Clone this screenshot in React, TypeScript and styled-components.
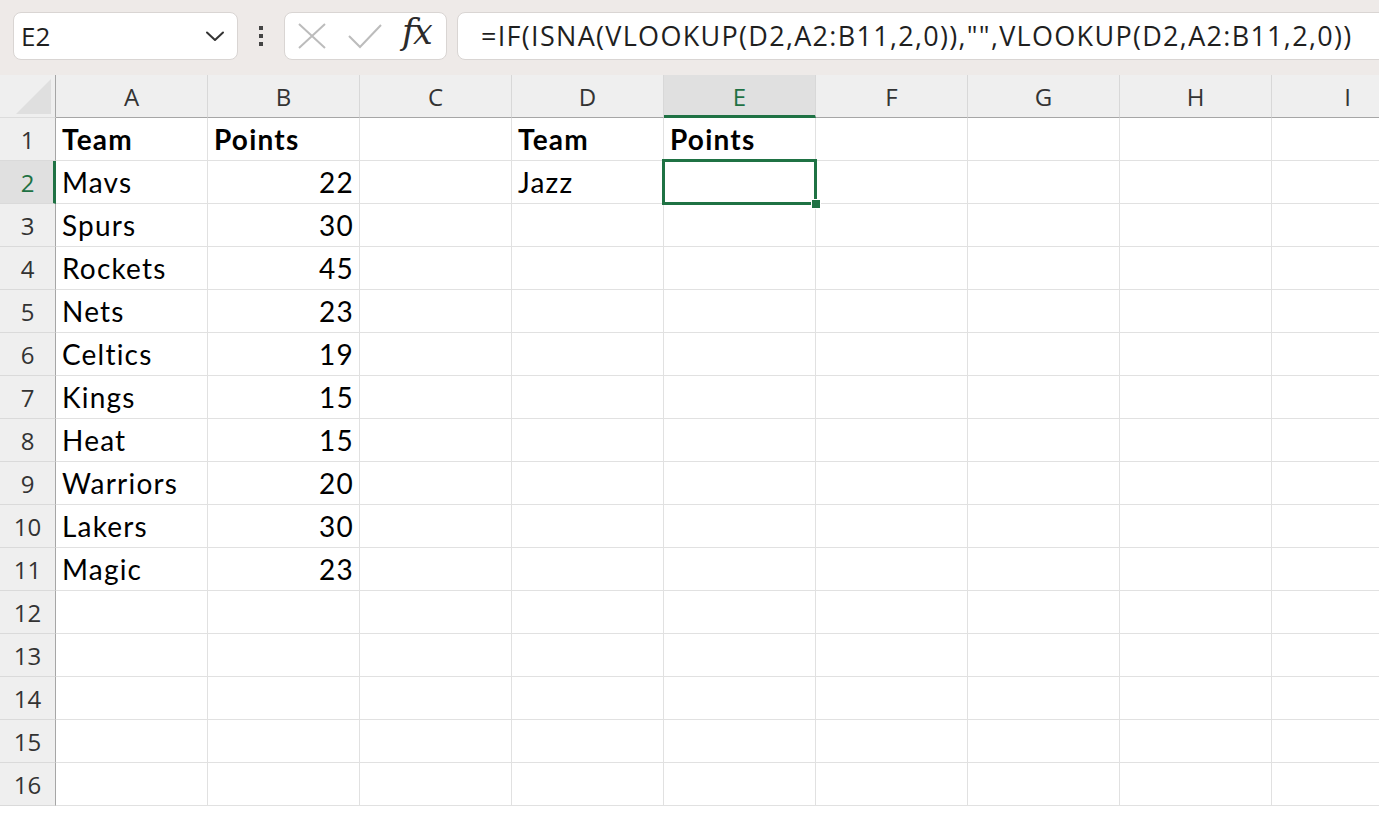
import styled, { createGlobalStyle } from "styled-components";

const COLS = ["A", "B", "C", "D", "E", "F", "G", "H", "I"];
const ROW_COUNT = 16;
const green = "#1f7244";

type CellValue = { text: string; bold?: boolean; num?: boolean };

const data: Record<string, CellValue> = {
  A1: { text: "Team", bold: true },
  B1: { text: "Points", bold: true },
  D1: { text: "Team", bold: true },
  E1: { text: "Points", bold: true },
  D2: { text: "Jazz" },
};

const teams: [string, number][] = [
  ["Mavs", 22],
  ["Spurs", 30],
  ["Rockets", 45],
  ["Nets", 23],
  ["Celtics", 19],
  ["Kings", 15],
  ["Heat", 15],
  ["Warriors", 20],
  ["Lakers", 30],
  ["Magic", 23],
];
teams.forEach(([name, pts], i) => {
  data[`A${i + 2}`] = { text: name };
  data[`B${i + 2}`] = { text: String(pts), num: true };
});

const GlobalStyle = createGlobalStyle`
  html, body {
    margin: 0;
    padding: 0;
    background: #ffffff;
    overflow: hidden;
  }
  * {
    box-sizing: border-box;
  }
`;

const Page = styled.div`
  width: 1379px;
  height: 814px;
  overflow: hidden;
  background: #ffffff;
  font-family: "Open Sans", "Noto Sans", sans-serif;
`;

const Toolbar = styled.div`
  height: 75px;
  background: #eeeae8;
  display: flex;
  align-items: center;
  padding: 0 0 4px 13px;
`;

const Box = styled.div`
  height: 48px;
  background: #ffffff;
  border: 1px solid #d9d5d3;
  border-radius: 8px;
  display: flex;
  align-items: center;
`;

const NameBox = styled(Box)`
  width: 225px;
  padding: 0 10px 0 7px;
  justify-content: space-between;
  font-size: 26px;
  color: #1f1f1f;
`;

const Dots = styled.div`
  width: 46px;
  display: flex;
  flex-direction: column;
  align-items: center;
  gap: 4px;

  span {
    width: 4px;
    height: 4px;
    background: #444;
  }
`;

const FxBox = styled(Box)`
  width: 163px;
  padding: 0 0 0 13px;
  gap: 22px;
`;

const FxLabel = styled.span`
  font-family: "DejaVu Serif", "Liberation Serif", serif;
  font-style: italic;
  font-weight: 400;
  font-size: 35px;
  color: #2b2b2b;
  letter-spacing: -2px;
  margin: -7px 0 0 -2px;
`;

const FormulaBox = styled(Box)`
  flex: 1;
  margin-left: 10px;
  margin-right: -20px;
  padding-left: 23px;
  font-size: 27px;
  letter-spacing: 1.3px;
  color: #1f1f1f;
  white-space: nowrap;
`;

const Sheet = styled.div`
  display: grid;
  grid-template-columns: 56px repeat(${COLS.length}, 152px);
  grid-auto-rows: 43px;
`;

const Corner = styled.div`
  position: relative;
  background: #efefef;
  border-bottom: 1px solid #dcdcdc;
  border-right: 1px solid #a6a6a6;

  &::after {
    content: "";
    position: absolute;
    right: 4px;
    bottom: 3px;
    width: 0;
    height: 0;
    border-left: 35px solid transparent;
    border-bottom: 35px solid #dfdfdf;
  }
`;

const ColHeader = styled.div<{ $active?: boolean }>`
  background: ${(p) => (p.$active ? "#e0e0e0" : "#efefef")};
  border-right: 1px solid #d8d8d8;
  border-bottom: ${(p) => (p.$active ? `3px solid ${green}` : "1px solid #a6a6a6")};
  display: flex;
  align-items: center;
  justify-content: center;
  padding-top: ${(p) => (p.$active ? "2px" : "0")};
  font-size: 24px;
  color: ${(p) => (p.$active ? green : "#333333")};
`;

const RowHeader = styled.div<{ $active?: boolean }>`
  background: ${(p) => (p.$active ? "#e0e0e0" : "#efefef")};
  border-bottom: 1px solid #dadada;
  border-right: ${(p) => (p.$active ? `3px solid ${green}` : "1px solid #a6a6a6")};
  padding-left: ${(p) => (p.$active ? "2px" : "0")};
  display: flex;
  align-items: center;
  justify-content: center;
  font-size: 24px;
  color: ${(p) => (p.$active ? green : "#333333")};
`;

const Cell = styled.div<{ $bold?: boolean; $num?: boolean; $selected?: boolean }>`
  position: relative;
  border-right: 1px solid #e1e1e1;
  border-bottom: 1px solid #e1e1e1;
  display: flex;
  align-items: flex-end;
  justify-content: ${(p) => (p.$num ? "flex-end" : "flex-start")};
  padding: 0 5px 4px 6px;
  font-family: "Lato", "Carlito", sans-serif;
  font-size: 28px;
  letter-spacing: 1.2px;
  font-weight: ${(p) => (p.$bold ? 700 : 400)};
  color: #000000;
  white-space: nowrap;

  ${(p) =>
    p.$selected &&
    `
    &::before {
      content: "";
      position: absolute;
      left: -2px;
      top: -2px;
      right: -2px;
      bottom: -2px;
      border: 3px solid ${green};
      z-index: 2;
    }
    &::after {
      content: "";
      position: absolute;
      right: -6px;
      bottom: -6px;
      width: 8px;
      height: 8px;
      background: ${green};
      border: 1px solid #ffffff;
      z-index: 3;
    }
  `}
`;

const Chevron = () => (
  <svg width="24" height="24" viewBox="0 0 24 24" fill="none">
    <path d="M4 8.5 L12 16 L20 8.5" stroke="#333" strokeWidth="2" strokeLinecap="round" strokeLinejoin="round" />
  </svg>
);

const CrossIcon = () => (
  <svg width="28" height="26" viewBox="0 0 28 26" fill="none">
    <path d="M1 1 L27 25 M27 1 L1 25" stroke="#bcbcbc" strokeWidth="2" />
  </svg>
);

const CheckIcon = () => (
  <svg width="34" height="26" viewBox="0 0 34 26" fill="none">
    <path d="M1 13 L12 24 L33 2" stroke="#bcbcbc" strokeWidth="2" />
  </svg>
);

export default function App() {
  return (
    <Page>
      <GlobalStyle />
      <Toolbar>
        <NameBox>
          <span>E2</span>
          <Chevron />
        </NameBox>
        <Dots>
          <span />
          <span />
          <span />
        </Dots>
        <FxBox>
          <CrossIcon />
          <CheckIcon />
          <FxLabel>fx</FxLabel>
        </FxBox>
        <FormulaBox>=IF(ISNA(VLOOKUP(D2,A2:B11,2,0)),"",VLOOKUP(D2,A2:B11,2,0))</FormulaBox>
      </Toolbar>
      <Sheet>
        <Corner />
        {COLS.map((c) => (
          <ColHeader key={c} $active={c === "E"}>
            {c}
          </ColHeader>
        ))}
        {Array.from({ length: ROW_COUNT }, (_, r) => {
          const row = r + 1;
          return [
            <RowHeader key={`h${row}`} $active={row === 2}>
              {row}
            </RowHeader>,
            ...COLS.map((c) => {
              const v = data[`${c}${row}`];
              return (
                <Cell key={`${c}${row}`} $bold={v?.bold} $num={v?.num} $selected={c === "E" && row === 2}>
                  {v?.text}
                </Cell>
              );
            }),
          ];
        })}
      </Sheet>
    </Page>
  );
}
